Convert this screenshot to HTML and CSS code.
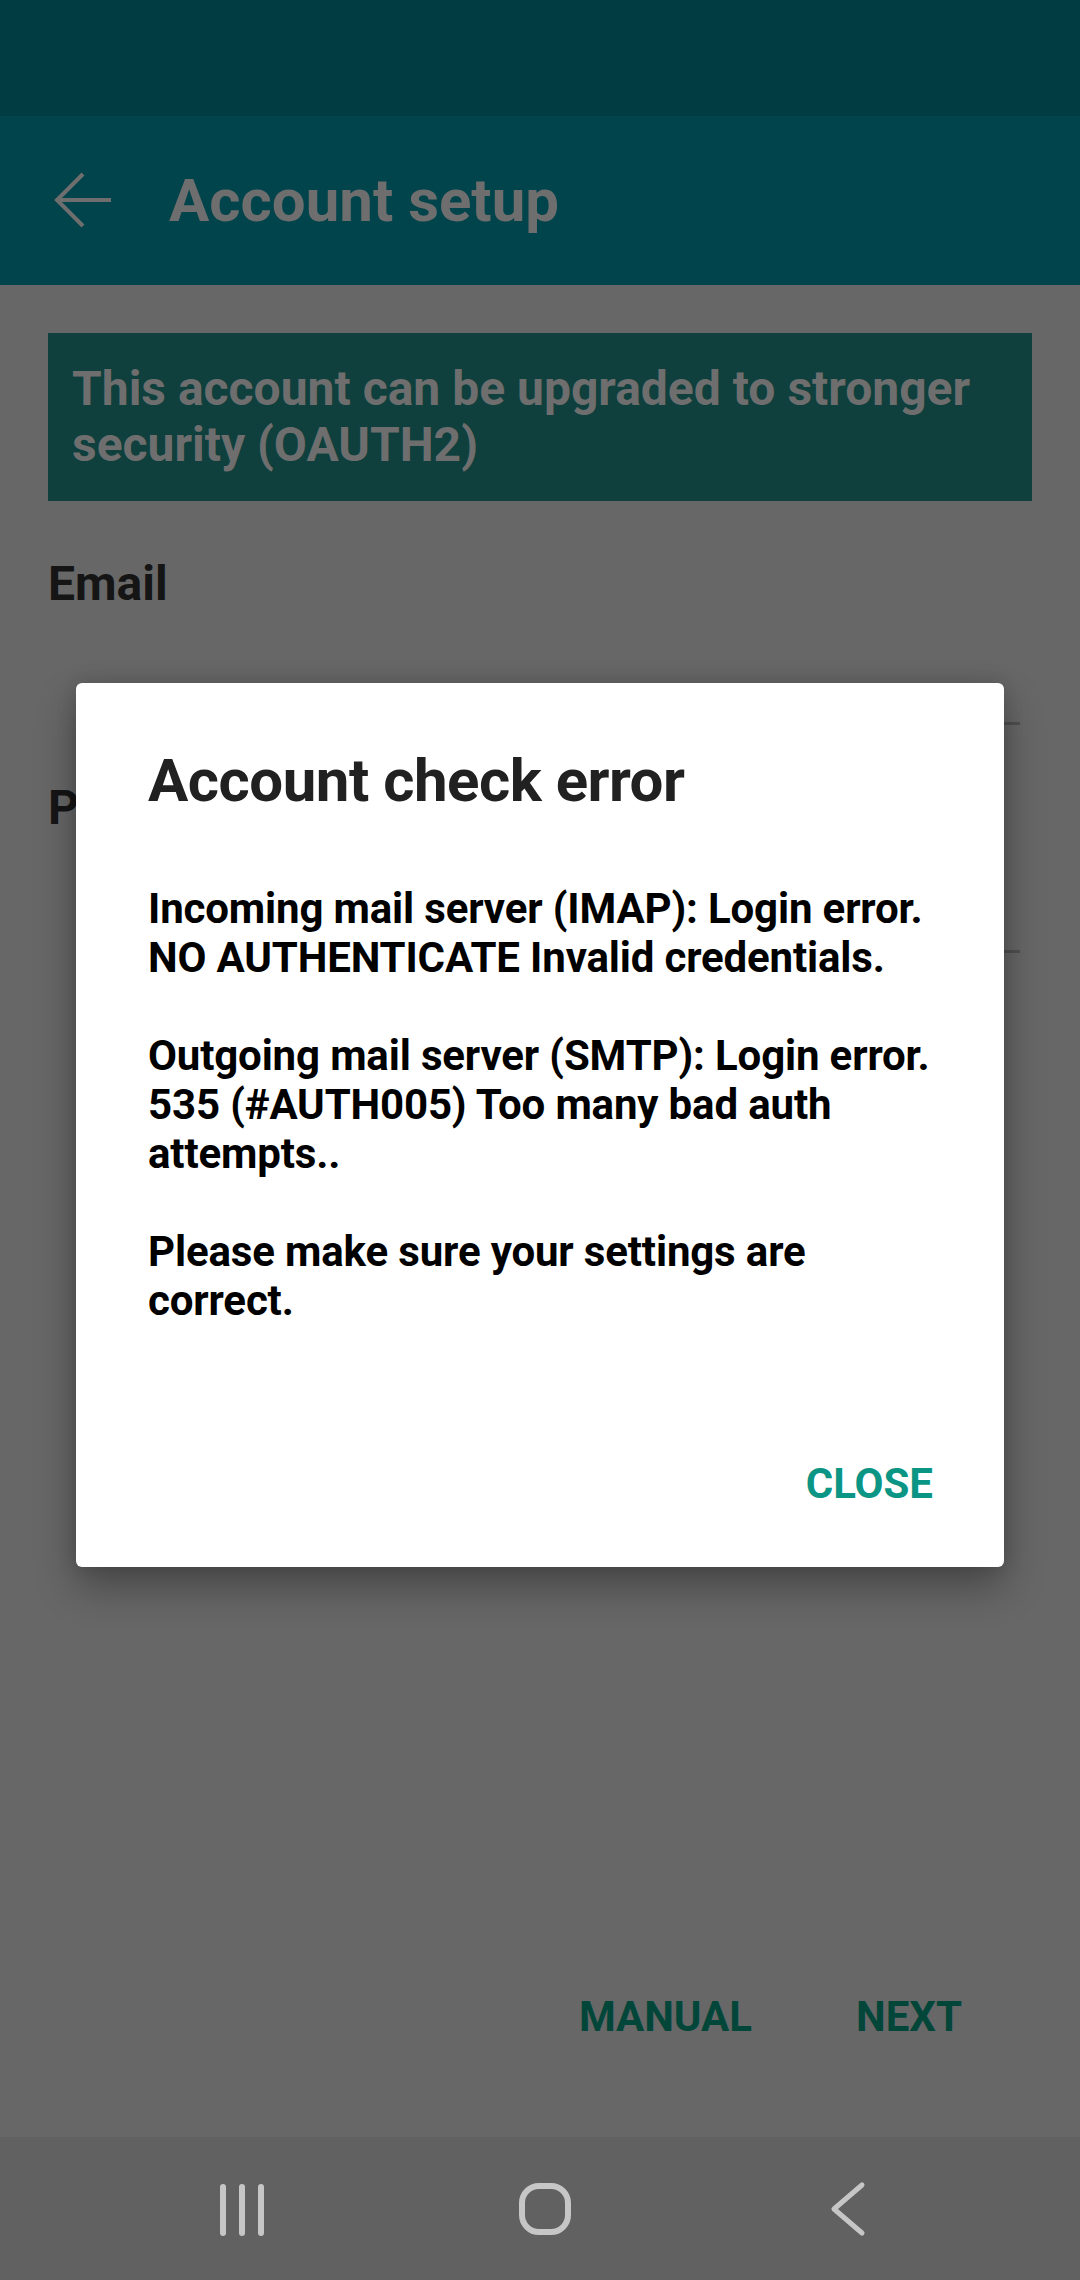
FILE: index.html
```html
<!DOCTYPE html>
<html lang="en">
<head>
    <meta charset="UTF-8">
    <meta name="viewport" content="width=device-width, initial-scale=1.0">
    <title>Account setup</title>
    <link rel="stylesheet" href="styles.css">
</head>
<body>

<div class="status-bar"></div>

<div class="app-bar">
    <svg class="back-icon" width="60" height="60" viewBox="0 0 60 60">
        <path d="M57 29H3M29 3L3 29L29 55" fill="none" stroke="#6e6e6e" stroke-width="4"/>
    </svg>
    <div class="app-title">Account setup</div>
</div>

<div class="content">
    <div class="banner">This account can be upgraded to stronger security (OAUTH2)</div>

    <div class="field-label">Email</div>
    <div class="field-input"></div>

    <div class="field-label">Password</div>
    <div class="field-input second"></div>

    <div class="bottom-actions">
        <button class="text-button dark">MANUAL</button>
        <button class="text-button dark">NEXT</button>
    </div>
</div>

<div class="nav-bar">
    <svg width="60" height="60" viewBox="0 0 60 60">
        <!-- recents -->
        <path d="M11 8V54M30 8V54M49 8V54" stroke="#c6c6c6" stroke-width="6" stroke-linecap="round"/>
    </svg>
    <svg width="60" height="60" viewBox="0 0 60 60">
        <!-- home -->
        <rect x="7" y="7" width="46" height="46" rx="17" fill="none" stroke="#c6c6c6" stroke-width="6"/>
    </svg>
    <svg width="60" height="60" viewBox="0 0 60 60">
        <!-- back -->
        <path d="M44 6L16 30L44 54" fill="none" stroke="#c6c6c6" stroke-width="5" stroke-linecap="round" stroke-linejoin="round"/>
    </svg>
</div>

<!-- Dialogo de erro por cima da tela -->
<div class="dialog">
    <div class="dialog-title">Account check error</div>
    <div class="dialog-message">Incoming mail server (IMAP): Login error.<br>NO AUTHENTICATE Invalid credentials.<br><br>Outgoing mail server (SMTP): Login error.<br>535 (#AUTH005) Too many bad auth<br>attempts..<br><br>Please make sure your settings are<br>correct.</div>
    <div class="dialog-actions">
        <button class="text-button accent">CLOSE</button>
    </div>
</div>

</body>
</html>
```

FILE: styles.css
```css
body {
    margin: 0;
    padding: 0;
    width: 1080px;
    height: 2280px;
    overflow: hidden;
    background: #676767;
    font-family: Roboto, "Liberation Sans", sans-serif;
    display: flex;
    flex-direction: column;
}

.status-bar {
    height: 116px;
    background: #013c42;
}

.app-bar {
    height: 169px;
    background: #02444b;
    display: flex;
    align-items: center;
    padding-left: 54px;
}

.back-icon {
    margin-right: 55px;
}

.app-title {
    font-size: 60px;
    font-weight: 700;
    color: #6e6e6e;
    line-height: 70px;
}

.content {
    flex: 1;
    display: flex;
    flex-direction: column;
    padding: 48px 48px 0;
}

.banner {
    background: #0f403d;
    color: #6e6e6e;
    font-size: 48px;
    font-weight: 700;
    line-height: 56px;
    padding: 28px 24px;
}

.field-label {
    margin-top: 55px;
    font-size: 48px;
    font-weight: 700;
    line-height: 56px;
    color: #151515;
}

.field-input {
    height: 110px;
    margin: 0 12px 0 60px;
    border-bottom: 3px solid #505050;
}

.field-input.second {
    height: 114px;
}

.bottom-actions {
    margin-top: auto;
    margin-bottom: 67px;
    display: flex;
    justify-content: flex-end;
    gap: 56px;
    padding-right: 46px;
}

.text-button {
    border: none;
    background: none;
    height: 108px;
    padding: 0 24px;
    font-family: Roboto, "Liberation Sans", sans-serif;
    font-size: 42px;
    font-weight: 700;
}

.text-button.dark {
    color: #02463a;
}

.text-button.accent {
    color: #0b9584;
}

.nav-bar {
    height: 143px;
    background: #616161;
    display: flex;
    align-items: center;
    justify-content: center;
    gap: 243px;
    padding-left: 10px;
}

.dialog {
    position: absolute;
    left: 76px;
    top: 683px;
    width: 928px;
    height: 884px;
    box-sizing: border-box;
    background: #fff;
    border-radius: 6px;
    box-shadow: 0 20px 40px rgba(0, 0, 0, 0.3), 0 0 20px rgba(0, 0, 0, 0.15);
    padding: 63px 0 30px 72px;
    display: flex;
    flex-direction: column;
}

.dialog-title {
    font-size: 60px;
    font-weight: 700;
    line-height: 70px;
    letter-spacing: -0.5px;
    color: #212121;
}

.dialog-message {
    margin-top: 68px;
    font-size: 42px;
    font-weight: 700;
    line-height: 49px;
    letter-spacing: -0.15px;
    color: #000;
    white-space: nowrap;
}

.dialog-actions {
    margin-top: auto;
    display: flex;
    justify-content: flex-end;
    padding-right: 47px;
}
```
